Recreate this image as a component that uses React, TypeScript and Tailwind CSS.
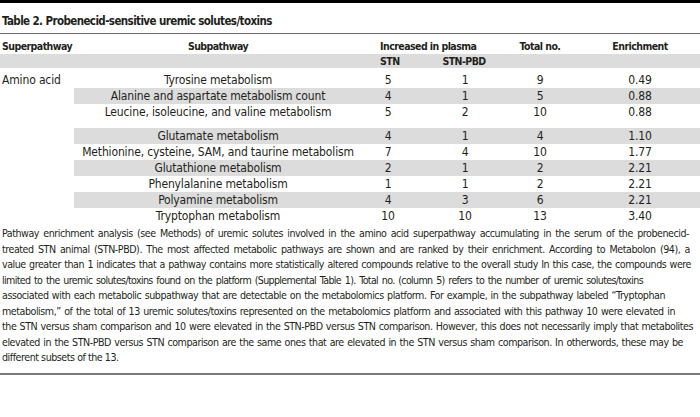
const rows = [
  { sub: "Tyrosine metabolism", stn: "5", pbd: "1", total: "9", enr: "0.49", gray: false },
  { sub: "Alanine and aspartate metabolism count", stn: "4", pbd: "1", total: "5", enr: "0.88", gray: true },
  { sub: "Leucine, isoleucine, and valine metabolism", stn: "5", pbd: "2", total: "10", enr: "0.88", gray: false },
  null,
  { sub: "Glutamate metabolism", stn: "4", pbd: "1", total: "4", enr: "1.10", gray: true },
  { sub: "Methionine, cysteine, SAM, and taurine metabolism", stn: "7", pbd: "4", total: "10", enr: "1.77", gray: false },
  { sub: "Glutathione metabolism", stn: "2", pbd: "1", total: "2", enr: "2.21", gray: true },
  { sub: "Phenylalanine metabolism", stn: "1", pbd: "1", total: "2", enr: "2.21", gray: false },
  { sub: "Polyamine metabolism", stn: "4", pbd: "3", total: "6", enr: "2.21", gray: true },
  { sub: "Tryptophan metabolism", stn: "10", pbd: "10", total: "13", enr: "3.40", gray: false },
];

// widths taken from where each printed line ends
const caption = [
  { text: "Pathway enrichment analysis (see Methods) of uremic solutes involved in the amino acid superpathway accumulating in the serum of the probenecid-", w: "w-[687px]" },
  { text: "treated STN animal (STN-PBD). The most affected metabolic pathways are shown and are ranked by their enrichment. According to Metabolon (94), a", w: "w-[688px]" },
  { text: "value greater than 1 indicates that a pathway contains more statistically altered compounds relative to the overall study In this case, the compounds were", w: "w-[689px]" },
  { text: "limited to the uremic solutes/toxins found on the platform (Supplemental Table 1). Total no. (column 5) refers to the number of uremic solutes/toxins", w: "w-[641px] tracking-[-0.65px]" },
  { text: "associated with each metabolic subpathway that are detectable on the metabolomics platform. For example, in the subpathway labeled \u201cTryptophan", w: "w-[663px]" },
  { text: "metabolism,\u201d of the total of 13 uremic solutes/toxins represented on the metabolomics platform and associated with this pathway 10 were elevated in", w: "w-[673px]" },
  { text: "the STN versus sham comparison and 10 were elevated in the STN-PBD versus STN comparison. However, this does not necessarily imply that metabolites", w: "w-[691px]" },
  { text: "elevated in the STN-PBD versus STN comparison are the same ones that are elevated in the STN versus sham comparison. In otherwords, these may be", w: "w-[681px]" },
];

const grid = "grid grid-cols-[74px_288px_52px_102px_48px_136px]";
const inner = "grid grid-cols-[288px_52px_102px_48px_136px]";
const cell = "flex justify-center whitespace-nowrap";

export default function App() {
  return (
    <div className="w-[700px] h-[417px] overflow-hidden bg-white text-[#231f20] font-['DejaVu_Sans_Condensed',Roboto,sans-serif] text-[12px] leading-none">
      <div className="h-[3px] bg-black" />
      <h1 className="h-[30px] pl-[2px] pt-[13px] text-[11.5px] font-bold tracking-[-0.6px]">
        Table 2. Probenecid-sensitive uremic solutes/toxins
      </h1>
      <div className="h-px bg-[#6a6a6a]" />

      <div className={`${grid} h-[20px] items-end pb-[3px] text-[10.5px] font-bold tracking-[-0.55px]`}>
        <div className="pl-[2px]">Superpathway</div>
        <div className={cell}>Subpathway</div>
        <div className="col-span-2 whitespace-nowrap pl-[18px]">Increased in plasma</div>
        <div className={cell}>Total no.</div>
        <div className={`${cell} pl-[16px]`}>Enrichment</div>
      </div>
      <div className={`${grid} h-[14px] items-center bg-[#dcdcdc] text-[10.5px] font-bold tracking-[-0.55px]`}>
        <div />
        <div />
        <div className="pl-[18px]">STN</div>
        <div className={`${cell} pr-[2px]`}>STN-PBD</div>
        <div />
        <div />
      </div>

      <div className="pt-[4px] tracking-[-0.15px]">
        {rows.map((r, i) =>
          r === null ? (
            <div key={i} className="h-[8px]" />
          ) : (
            <div key={i} className={`${grid} h-[16px]`}>
              <div className="flex items-center pl-[2px] whitespace-nowrap">{i === 0 ? "Amino acid" : ""}</div>
              <div className={`col-span-5 ${inner} items-center ${r.gray ? "bg-[#dcdcdc]" : ""}`}>
                <div className={cell}>{r.sub}</div>
                <div className={cell}>{r.stn}</div>
                <div className={cell}>{r.pbd}</div>
                <div className={cell}>{r.total}</div>
                <div className={`${cell} pl-[16px]`}>{r.enr}</div>
              </div>
            </div>
          )
        )}
      </div>

      <div className="mt-[2px] pl-[2px] text-[10.6px] leading-[15.5px] tracking-[-0.45px]">
        {caption.map((l, i) => (
          <p key={i} className={`${l.w} text-justify [text-align-last:justify]`}>
            {l.text}
          </p>
        ))}
        <p>different subsets of the 13.</p>
      </div>
      <div className="mt-[7px] h-[2px] bg-[#7a7a7a]" />
    </div>
  );
}
